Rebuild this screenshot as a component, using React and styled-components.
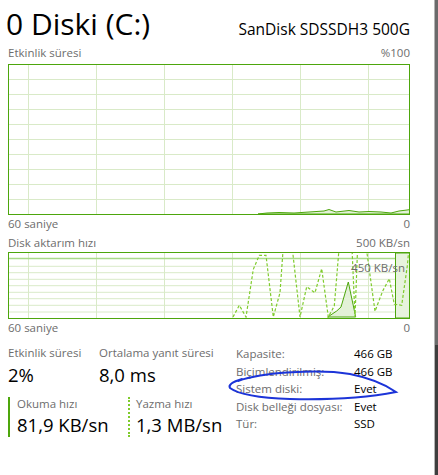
import React from 'react';
import styled, {createGlobalStyle} from 'styled-components';

// Palette
const green = '#4da60c';
const lightGreen = '#7fcb2c';
const gridGreen = '#d9eac8';
const labelGray = '#6d6d6d';

const GlobalStyle = createGlobalStyle`
  html, body {
    margin: 0;
    padding: 0;
    background: #fff;
  }
  body {
    font-family: "Open Sans", "Noto Sans", sans-serif;
    color: #000;
  }
`;

const Window = styled.div`
  display: flex;
  width: 438px;
  height: 475px;
  overflow: hidden;
  background: #fff;
`;
const Main = styled.div`
  position: relative;
  flex: 1;
  display: flex;
  flex-direction: column;
  padding: 0 24px 0 8px;
`;
const Scrollbar = styled.div`
  width: 3px;
  border-left: 1px solid #b4b4b4;
  background: linear-gradient(#6b6b6b 0 345px, #3e3e3e 345px);
`;
const Header = styled.div`
  display: flex;
  justify-content: space-between;
  align-items: baseline;
  height: 45px;
  padding-top: 4px;
  box-sizing: border-box;
`;
const Title = styled.div`
  font-size: 30px;
  line-height: 40px;
  margin-left: -2px;
`;
const Model = styled.div`
  font-size: 15.5px;
`;
const AxisRow = styled.div`
  display: flex;
  justify-content: space-between;
  font-size: 11.5px;
  line-height: 16px;
  color: ${labelGray};
  margin-top: ${props => props.gap || 0}px;
`;
const ChartBox = styled.div`
  position: relative;
  height: ${props => props.h}px;
  border: 1px solid ${green};
  box-sizing: border-box;
  margin-top: ${props => props.gap || 0}px;
  svg {
    display: block;
  }
`;
const ChartTag = styled.span`
  position: absolute;
  right: 4px;
  top: 8px;
  font-size: 11.5px;
  line-height: 14px;
  color: ${labelGray};
`;
const Bottom = styled.div`
  display: flex;
  margin-top: 9px;
`;
const Stats = styled.div`
  width: 228px;
  display: flex;
  flex-direction: column;
`;
const StatRow = styled.div`
  display: flex;
`;
const Stat = styled.div`
  width: ${props => props.w}px;
  box-sizing: border-box;
`;
const RateStat = styled.div`
  width: ${props => props.w}px;
  height: 40px;
  margin-top: 8px;
  box-sizing: border-box;
  border-left: 2px ${props => props.dotted ? 'dotted' : 'solid'} ${props => props.dotted ? lightGreen : green};
  padding-left: ${props => props.dotted ? 6 : 7}px;
`;
const StatLabel = styled.div`
  font-size: 11.5px;
  line-height: ${props => props.lh || 16}px;
  color: ${labelGray};
`;
const StatValue = styled.div`
  font-size: 18.5px;
  line-height: 28px;
`;
const Props = styled.div`
  display: grid;
  grid-template-columns: 118px auto;
  grid-auto-rows: 17.5px;
  align-content: start;
  font-size: 11.5px;
  line-height: 17.5px;
`;
const PropLabel = styled.div`
  color: ${labelGray};
`;
const PropValue = styled.div`
  color: #000;
`;
const Scribble = styled.svg`
  position: absolute;
  left: 225px;
  top: 365px;
  pointer-events: none;
`;

const vLines = [19.5, 87.5, 155.5, 223.5, 291.5, 359.5];

const ActivityChart = () => {
    const rows = Array.from({length: 9}, (_, i) => 14.5 + i * 15);
    const pts = '249,149 258,148 270,147.5 285,148 300,147 315,146 320,144.5 327,147 340,145.5 350,147 360,146.5 372,147 382,148 390,146 398,145 405,144 400,149';
    return (
        <ChartBox h={151} gap={3}>
            <svg width="400" height="149">
                {rows.map(y => <line key={y} x1="0" x2="400" y1={y} y2={y} stroke={gridGreen} strokeWidth="1"/>)}
                {vLines.map(x => <line key={x} x1={x} x2={x} y1="0" y2="149" stroke={gridGreen} strokeWidth="1"/>)}
                <polygon points={pts} fill="#e3f1d7" stroke={green} strokeWidth="1"/>
            </svg>
        </ChartBox>
    );
};

const TransferChart = () => {
    const rows = [13.3, 19.7, 26.3, 32.7, 39.3, 45.7, 52.3, 59];
    const write = '233,316 239.3,304.3 246,316 253.3,268.3 259.3,254.3 266,254.3 273.3,316 280,291.7 284,236 291,236 300,316 306.7,285.7 315,291.7 321.7,267.7 328.3,316 334.3,305 340,236 351.5,236 355,316 358,236 366.7,250 375,310.3 382.7,290 389.3,277.7 394.3,303.3 401.7,304.3 407.3,265 410,236';
    const read = '327.7,316 336.7,310 341,306 348.3,281 355.7,316';
    return (
        <ChartBox h={67} gap={1}>
            <svg width="400" height="65">
                {rows.map(y => <line key={y} x1="0" x2="400" y1={y} y2={y} stroke={gridGreen} strokeWidth="1"/>)}
                {vLines.map(x => <line key={x} x1={x} x2={x} y1="0" y2="65" stroke={gridGreen} strokeWidth="1"/>)}
                <line x1="0" x2="400" y1="5.5" y2="5.5" stroke="#a9da88" strokeWidth="1.5"/>
                <rect x="386.5" y="0" width="14" height="65" fill="#e7f3dd" stroke={green} strokeWidth="1"/>
                <g transform="translate(-9 -252)">
                    <polygon points={read} fill="#e3f1d7" stroke={green} strokeWidth="1"/>
                    <polyline points={write} fill="none" stroke={lightGreen} strokeWidth="1.2" strokeDasharray="3 2"/>
                </g>
            </svg>
            <ChartTag>450 KB/sn</ChartTag>
        </ChartBox>
    );
};

const properties = [
    ['Kapasite:', '466 GB'],
    ['Biçimlendirilmiş:', '466 GB'],
    ['Sistem diski:', 'Evet'],
    ['Disk belleği dosyası:', 'Evet'],
    ['Tür:', 'SSD'],
];

const App = () => (
    <Window>
        <GlobalStyle/>
        <Main>
            <Header>
                <Title>0 Diski (C:)</Title>
                <Model>SanDisk SDSSDH3 500G</Model>
            </Header>
            <AxisRow>
                <span>Etkinlik süresi</span>
                <span>%100</span>
            </AxisRow>
            <ActivityChart/>
            <AxisRow gap={1}>
                <span>60 saniye</span>
                <span>0</span>
            </AxisRow>
            <AxisRow gap={3}>
                <span>Disk aktarım hızı</span>
                <span>500 KB/sn</span>
            </AxisRow>
            <TransferChart/>
            <AxisRow gap={1}>
                <span>60 saniye</span>
                <span>0</span>
            </AxisRow>
            <Bottom>
                <Stats>
                    <StatRow>
                        <Stat w={91}>
                            <StatLabel>Etkinlik süresi</StatLabel>
                            <StatValue>2%</StatValue>
                        </Stat>
                        <Stat w={137}>
                            <StatLabel>Ortalama yanıt süresi</StatLabel>
                            <StatValue>8,0 ms</StatValue>
                        </Stat>
                    </StatRow>
                    <StatRow>
                        <RateStat w={120}>
                            <StatLabel lh={14}>Okuma hızı</StatLabel>
                            <StatValue>81,9 KB/sn</StatValue>
                        </RateStat>
                        <RateStat w={108} dotted>
                            <StatLabel lh={14}>Yazma hızı</StatLabel>
                            <StatValue>1,3 MB/sn</StatValue>
                        </RateStat>
                    </StatRow>
                </Stats>
                <Props>
                    {properties.map(([k, v]) => (
                        <React.Fragment key={k}>
                            <PropLabel>{k}</PropLabel>
                            <PropValue>{v}</PropValue>
                        </React.Fragment>
                    ))}
                </Props>
            </Bottom>
            <Scribble width="180" height="45" viewBox="225 365 180 45">
                <path d="M 238 381 C 262 372, 320 369, 350 374 C 370 378, 386 385, 396 392 C 370 397, 330 400, 290 399 C 260 398, 238 394, 230 388 C 228 385, 232 382, 242 379"
                      fill="none" stroke="#1c34d8" strokeWidth="2" strokeLinecap="round"/>
            </Scribble>
        </Main>
        <Scrollbar/>
    </Window>
);

export default App;
